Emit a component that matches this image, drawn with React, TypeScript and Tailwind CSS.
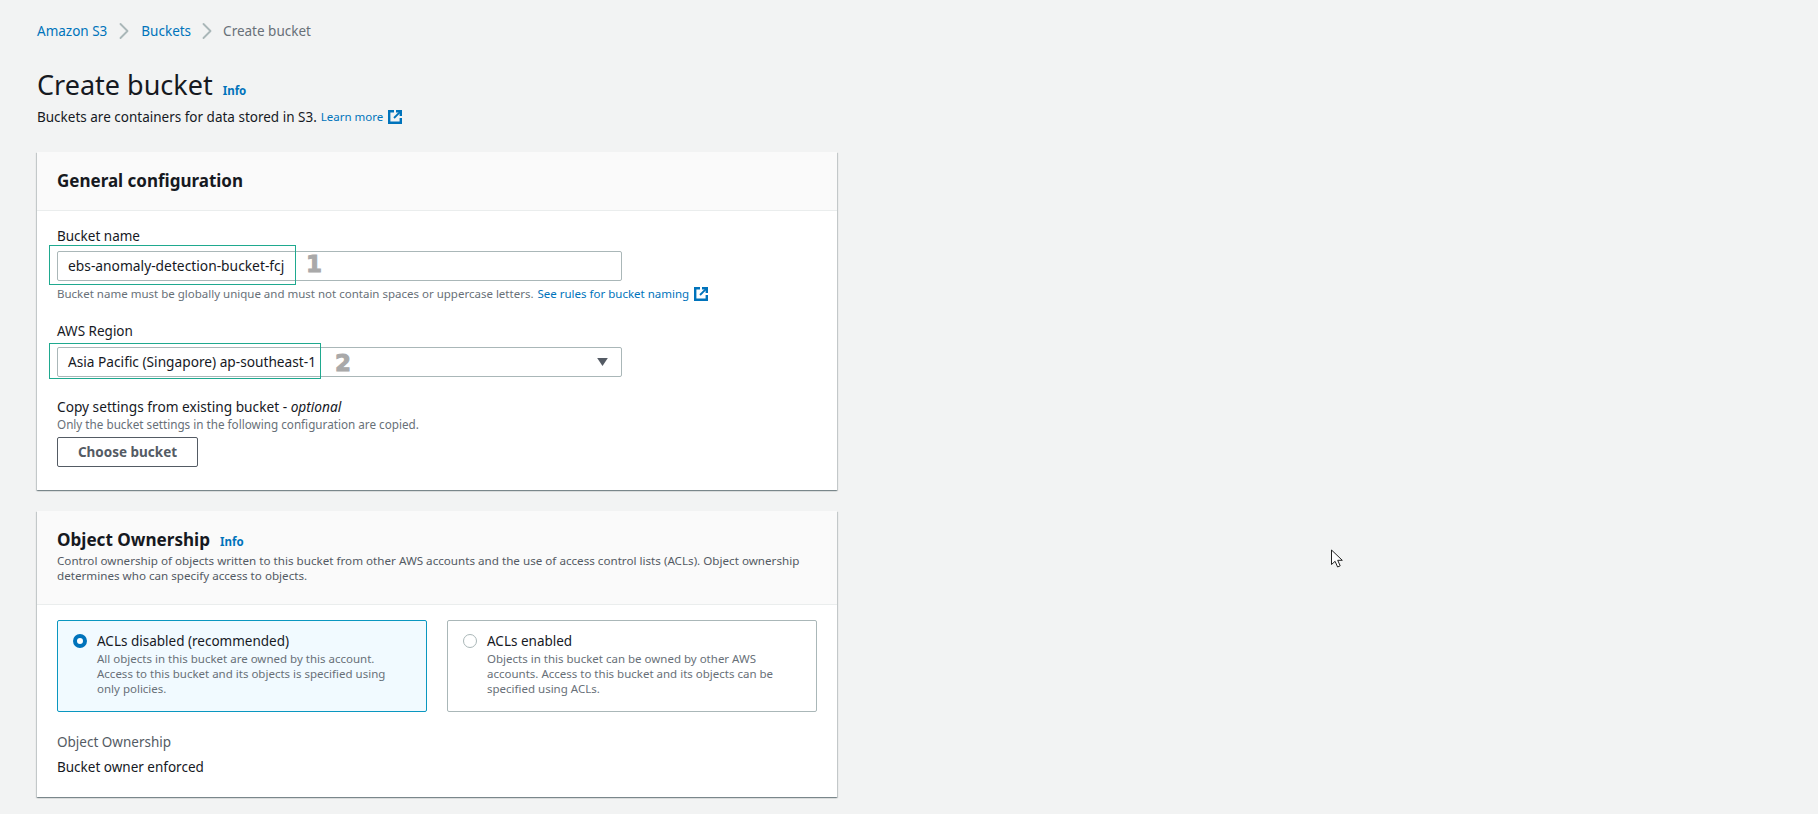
import { ChevronRight } from "lucide-react";

const ExternalIcon = () => (
  <svg viewBox="0 0 14 14" className="ml-[5px] inline-block w-[14px] h-[14px] shrink-0" fill="none" stroke="#0073bb" strokeWidth="2.4">
    <path d="M6 1.2H1.2v11.6h11.6V8" />
    <path d="M8 1.2h4.8V6" />
    <path d="M12.4 1.6 6 8" strokeWidth="1.8" />
  </svg>
);

const Info = () => <a className="text-[11.5px] font-bold text-[#0073bb]">Info</a>;

const Card = ({ head, children, className }: { head: React.ReactNode; children: React.ReactNode; className: string }) => (
  <section className={`w-[800px] bg-white shadow-[0_1px_1px_0_rgba(0,28,36,0.3),1px_1px_1px_0_rgba(0,28,36,0.15),-1px_1px_1px_0_rgba(0,28,36,0.15)] ${className}`}>
    <div className="bg-[#fafafa] border-b border-[#eaeded] px-5">{head}</div>
    {children}
  </section>
);

const Choice = ({ selected, title, text }: { selected?: boolean; title: string; text: string[] }) => (
  <div className={`flex-1 h-[92px] rounded-[2px] border pl-[15px] pt-[10px] flex gap-[10px] ${selected ? "border-[#0a97c0] bg-[#f1faff]" : "border-[#aab7b8] bg-white"}`}>
    {selected ? (
      <span className="mt-[3px] w-[14px] h-[14px] rounded-full border-[4px] border-[#0073bb] bg-white shrink-0" />
    ) : (
      <span className="mt-[3px] w-[14px] h-[14px] rounded-full border border-[#aab7b8] bg-white shrink-0" />
    )}
    <div>
      <div className="text-[13.5px] leading-[20px] text-[#16191f]">{title}</div>
      {text.map((t) => (
        <div key={t} className="text-[11.5px] leading-[15px] text-[#687078] whitespace-nowrap">{t}</div>
      ))}
    </div>
  </div>
);

export default function App() {
  return (
    <div className="relative w-[1818px] h-[814px] overflow-hidden bg-[#f2f3f3] pl-[37px] text-[#16191f] font-['Noto_Sans','Open_Sans',sans-serif]">
      {/* Breadcrumb */}
      <nav className="flex items-center h-[20px] mt-[21px] text-[13.5px] text-[#0073bb]">
        <a>Amazon S3</a>
        <ChevronRight className="mx-[3px] w-7 h-7 text-[#aab7b8]" strokeWidth={1.6} />
        <a>Buckets</a>
        <ChevronRight className="mx-[2px] w-7 h-7 text-[#aab7b8]" strokeWidth={1.6} />
        <span className="text-[#687078]">Create bucket</span>
      </nav>

      {/* Title */}
      <div className="flex items-baseline gap-[10px] mt-[24px] h-[40px]">
        <h1 className="text-[27px] leading-[40px] font-normal">Create bucket</h1>
        <Info />
      </div>
      <p className="flex items-center text-[13.5px] h-[20px] mt-[2px]">
        Buckets are containers for data stored in S3.
        <a className="ml-[4px] text-[11.5px] text-[#0073bb]">Learn more</a>
        <ExternalIcon />
      </p>

      {/* General configuration */}
      <Card
        className="mt-[25px] h-[338px]"
        head={<h2 className="h-[58px] flex items-center text-[17px] font-bold">General configuration</h2>}
      >
        <div className="px-5 pt-[15px]">
          <label className="block text-[13.5px] leading-[20px]">Bucket name</label>
          <div className="mt-[5px] w-[565px] h-[30px] border border-[#aab7b8] rounded-[2px] pl-[10px] flex items-center text-[13.8px]">
            ebs-anomaly-detection-bucket-fcj
          </div>
          <div className="flex items-center mt-[5px] h-[16px] text-[11.5px] text-[#687078]">
            Bucket name must be globally unique and must not contain spaces or uppercase letters.
            <a className="ml-[4px] text-[#0073bb]">See rules for bucket naming</a>
            <ExternalIcon />
          </div>
          <label className="block mt-[19px] text-[13.5px] leading-[20px]">AWS Region</label>
          <div className="mt-[6px] w-[565px] h-[30px] border border-[#aab7b8] rounded-[2px] pl-[10px] pr-[13px] flex items-center justify-between text-[13.7px]">
            Asia Pacific (Singapore) ap-southeast-1
            <svg viewBox="0 0 12 9" className="w-[11px] h-[8px]" fill="#545b64"><path d="M0 0h12L6 9z" /></svg>
          </div>
          <div className="mt-[20px] text-[13.7px] leading-[20px]">
            Copy settings from existing bucket - <i>optional</i>
          </div>
          <div className="text-[11.7px] leading-[15px] text-[#687078]">Only the bucket settings in the following configuration are copied.</div>
          <button className="mt-[5px] w-[141px] h-[30px] border border-[#545b64] rounded-[2px] bg-white text-[13.5px] font-bold text-[#545b64]">
            Choose bucket
          </button>
        </div>
      </Card>

      {/* Object Ownership */}
      <Card
        className="mt-[21px] h-[286px]"
        head={
          <div className="h-[93px] pt-[16px]">
            <div className="flex items-baseline gap-[10px]">
              <h2 className="text-[17.1px] leading-[25px] font-bold">Object Ownership</h2>
              <Info />
            </div>
            <p className="mt-[1px] text-[11.65px] leading-[15px] text-[#545b64] whitespace-nowrap">
              Control ownership of objects written to this bucket from other AWS accounts and the use of access control lists (ACLs). Object ownership
              <br />
              determines who can specify access to objects.
            </p>
          </div>
        }
      >
        <div className="px-5 pt-[15px]">
          <div className="flex gap-5 w-[760px]">
            <Choice
              selected
              title="ACLs disabled (recommended)"
              text={["All objects in this bucket are owned by this account.", "Access to this bucket and its objects is specified using", "only policies."]}
            />
            <Choice
              title="ACLs enabled"
              text={["Objects in this bucket can be owned by other AWS", "accounts. Access to this bucket and its objects can be", "specified using ACLs."]}
            />
          </div>
          <div className="mt-[20px] text-[13.5px] leading-[20px] text-[#545b64]">Object Ownership</div>
          <div className="mt-[5px] text-[13.5px] leading-[20px]">Bucket owner enforced</div>
        </div>
      </Card>

      {/* Screenshot annotations */}
      <div className="absolute left-[49px] top-[245px] w-[247px] h-[40px] border border-[#1fa98f]" />
      <div className="absolute left-[49px] top-[343px] w-[272px] h-[36px] border border-[#1fa98f]" />
      <span className="absolute left-[306px] top-[250px] text-[23px] leading-[28px] font-bold text-[#a9a9a9] [-webkit-text-stroke:1px_#a9a9a9] font-['DejaVu_Sans',sans-serif]">1</span>
      <span className="absolute left-[335px] top-[349px] text-[23px] leading-[28px] font-bold text-[#a9a9a9] [-webkit-text-stroke:1px_#a9a9a9] font-['DejaVu_Sans',sans-serif]">2</span>

      {/* Mouse cursor */}
      <svg viewBox="0 0 14 20" className="absolute left-[1330px] top-[549px] w-[14px] h-[20px]" fill="white" stroke="#222" strokeWidth="1">
        <path d="M1.5 1v14.5l3.6-3.2 2.5 5.7 2.6-1.2-2.5-5.5h4.6z" />
      </svg>
    </div>
  );
}
